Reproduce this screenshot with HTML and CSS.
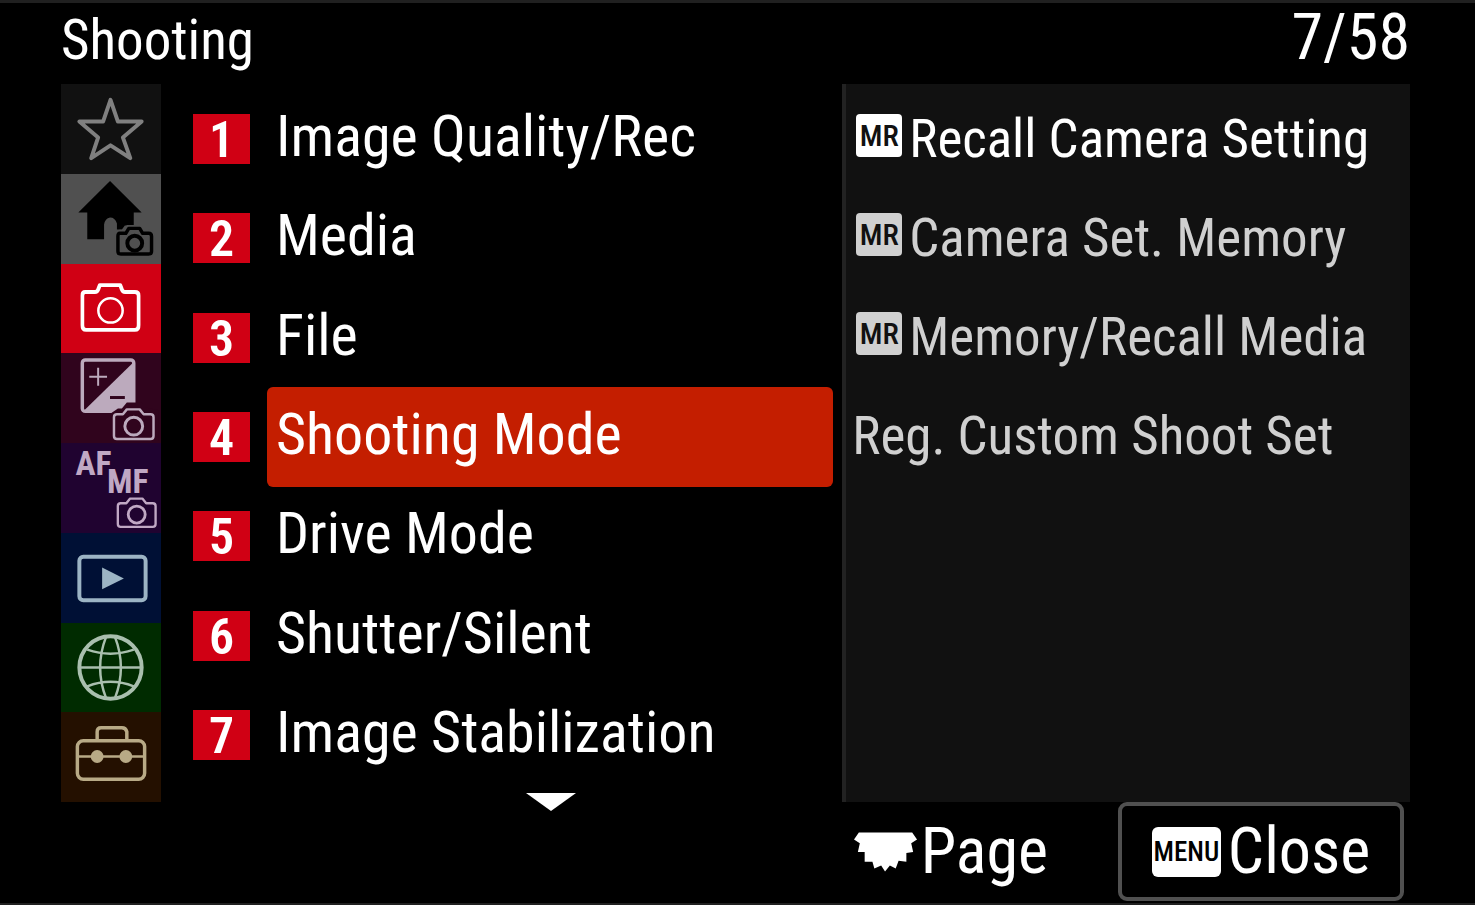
FILE: index.html
```html
<!DOCTYPE html>
<html lang="en">
<head>
<meta charset="utf-8">
<title>Shooting</title>
<meta name="viewport" content="width=device-width, initial-scale=1">
<link rel="stylesheet" href="styles.css">
</head>
<body>
<svg class="defs" aria-hidden="true">
  <symbol id="camera" viewBox="0 0 62 50">
    <path d="M5 9H15Q17.500 9 18.500 6L20 2H41L42.500 6Q43.500 9 46 9H56Q60 9 60 13V43Q60 48 56 48H6Q2 48 2 43V13Q2 9 5 9Z" fill="none" stroke="currentColor" stroke-width="4" stroke-linejoin="round"/>
    <circle cx="31" cy="28" r="12.500" fill="none" stroke="currentColor" stroke-width="2.600"/>
  </symbol>
  <symbol id="camera-small" viewBox="0 0 44 34">
    <path d="M5 7H11L15 2H28L32 7H39Q42 7 42 10V29Q42 32 39 32H5Q2 32 2 29V10Q2 7 5 7Z" fill="none" stroke="currentColor" stroke-width="2.500" stroke-linejoin="round"/>
    <circle cx="22" cy="19" r="9" fill="none" stroke="currentColor" stroke-width="3"/>
  </symbol>
</svg>
<header class="top">
  <h1 class="title">Shooting</h1>
  <p class="count">7/58</p>
</header>
<main class="menu">
  <nav class="tabs" aria-label="Menu tabs">
    <button class="tab tab-star" aria-label="My Menu">
      <svg viewBox="0 0 100 90"><path d="M49.500 16L57 38H81L62 54L69.500 75L49.500 62L30 75L37 54L18 38H42Z" fill="none" stroke="currentColor" stroke-width="4" stroke-linejoin="round"/></svg>
    </button>
    <button class="tab tab-home" aria-label="Main">
      <svg viewBox="0 0 100 90"><path d="M49 7L81 39H73V52H64L61 56H56V50Q54 44 49 44Q44 45 43 51V66H26V39H17Z" fill="currentColor"/>
      <path d="M59 60H65L68 55H79L82 60H88Q91 60 91 63V78Q91 81 88 81H60Q57 81 57 78V63Q57 60 59 60Z" fill="#505050" stroke="#505050" stroke-width="7"/><path d="M59 60H65L68 55H79L82 60H88Q91 60 91 63V78Q91 81 88 81H60Q57 81 57 78V63Q57 60 59 60Z" fill="none" stroke="currentColor" stroke-width="3.500" stroke-linejoin="round"/><circle cx="74" cy="70" r="7.500" fill="none" stroke="currentColor" stroke-width="4"/></svg>
    </button>
    <button class="tab tab-shoot" aria-label="Shooting" aria-current="page">
      <svg viewBox="0 0 100 90"><use href="#camera" x="19" y="19" width="61" height="50"/></svg>
    </button>
    <button class="tab tab-exposure" aria-label="Exposure/Color">
      <svg viewBox="0 0 100 90"><rect x="21" y="6" width="52" height="52" rx="3" fill="none" stroke="currentColor" stroke-width="3.500"/><path d="M73 8V58H22Z" fill="currentColor"/><path d="M28 23H46M37 14V32" stroke="currentColor" stroke-width="2"/><path d="M49 44H64" stroke="#30041d" stroke-width="3"/>
      <path d="M50 60L57 55H61L66 49H81L85 54L98 57V88H50Z" fill="#30041d"/><use href="#camera-small" x="51" y="54" width="44" height="34"/></svg>
    </button>
    <button class="tab tab-focus" aria-label="Focus">
      <svg viewBox="0 0 100 90"><text class="focus-text" x="14" y="32">AF</text><text class="focus-text" x="46" y="51">MF</text><use href="#camera-small" x="55" y="54" width="42" height="33"/></svg>
    </button>
    <button class="tab tab-play" aria-label="Playback">
      <svg viewBox="0 0 100 90"><rect x="18" y="24" width="67" height="44" rx="4" fill="none" stroke="currentColor" stroke-width="4"/><path d="M41 35L63 46L41 57Z" fill="currentColor"/></svg>
    </button>
    <button class="tab tab-network" aria-label="Network">
      <svg viewBox="0 0 100 90"><g fill="none" stroke="currentColor" stroke-width="2.500"><circle cx="49.500" cy="45" r="31.500" stroke-width="4"/><path d="M18 45H81M26 27Q49.500 35 73 27M26 64Q49.500 55 73 64M45 14Q33 45 45 76M54 14Q66 45 54 76"/></g></svg>
    </button>
    <button class="tab tab-setup" aria-label="Setup">
      <svg viewBox="0 0 100 90"><g fill="none" stroke="currentColor" stroke-width="3.500"><rect x="16" y="28" width="68" height="39" rx="6"/><path d="M36 27V19Q36 15 40 15H61Q65 15 66 19V27"/><path d="M16 44H84" stroke-width="2.500"/></g><circle cx="36" cy="44" r="6.500" fill="currentColor"/><circle cx="65" cy="44" r="6.500" fill="currentColor"/></svg>
    </button>
  </nav>
  <section class="groups" aria-label="Shooting groups">
    <ul class="group-list">
      <li class="row"><span class="num">1</span><button class="group">Image Quality/Rec</button></li>
      <li class="row"><span class="num">2</span><button class="group">Media</button></li>
      <li class="row"><span class="num">3</span><button class="group">File</button></li>
      <li class="row"><span class="num">4</span><button class="group selected">Shooting Mode</button></li>
      <li class="row"><span class="num">5</span><button class="group">Drive Mode</button></li>
      <li class="row"><span class="num">6</span><button class="group">Shutter/Silent</button></li>
      <li class="row"><span class="num">7</span><button class="group">Image Stabilization</button></li>
    </ul>
    <svg class="more" viewBox="0 0 50 18" aria-hidden="true"><path d="M0 0H50L25 18Z" fill="#fff"/></svg>
  </section>
  <section class="panel" aria-label="Shooting Mode">
    <button class="item item-on"><span class="chip">MR</span>Recall Camera Setting</button>
    <button class="item"><span class="chip">MR</span>Camera Set. Memory</button>
    <button class="item"><span class="chip">MR</span>Memory/Recall Media</button>
    <button class="item">Reg. Custom Shoot Set</button>
  </section>
</main>
<footer class="bottom">
  <p class="page-hint"><svg class="dial" viewBox="0 0 66 40" aria-hidden="true"><path d="M5 0H60L65 7L59 11L61 20L54 21L54 30L46 29L43 37L37 34L32 40L28 34L21 37L19 30L11 30L11 20L4 20L6 11L0 7Z" fill="#fff"/></svg>Page</p>
  <button class="close"><span class="menu-chip">MENU</span>Close</button>
</footer>
</body>
</html>
```
FILE: styles.css
```css
* { box-sizing: border-box; }

body {
  display: flex;
  flex-direction: column;
  min-height: 100vh;
  margin: 0;
  border-top: 3px solid #202020;
  border-bottom: 2px solid #202020;
  background: #000;
  color: #fff;
  font-family: "Roboto Condensed", "Liberation Sans Narrow", "Arial Narrow", "Liberation Sans", sans-serif;
}

button {
  margin: 0;
  padding: 0;
  border: 0;
  background: none;
  color: inherit;
  font: inherit;
  text-align: left;
  white-space: nowrap;
}

.defs { position: absolute; width: 0; height: 0; }

.top {
  display: flex;
  align-items: baseline;
  justify-content: space-between;
  height: 81px;
  padding: 0 65px 0 61px;
  line-height: 70px;
}

.title, .count { margin: 0; font-weight: 400; }
.title { font-size: 55px; }
.count { font-size: 64px; }

.menu {
  display: grid;
  flex: 1;
  grid-template-columns: 100px minmax(0, 6fr) minmax(0, 5fr);
  padding: 0 65px 0 61px;
}

.tabs { display: grid; grid-auto-rows: 1fr; }
.tab svg { display: block; width: 100%; height: 89px; }
.tab-star { background: #111; color: #808080; }
.tab-home { background: #505050; color: #000; }
.tab-shoot { background: #d00014; color: #fff; }
.tab-exposure { background: #30041d; color: #bcaabd; }
.tab-focus { background: #200330; color: #c0a8c4; }
.tab-play { background: #001035; color: #9cb4c4; }
.tab-network { background: #002b00; color: #a9bfae; }
.tab-setup { background: #241000; color: #b8aa86; }
.focus-text { fill: currentColor; font-size: 34px; font-weight: 700; }

.groups {
  display: flex;
  flex-direction: column;
  align-items: center;
  padding: 5px 9px 0 32px;
}

.group-list {
  display: grid;
  flex: 1;
  grid-auto-rows: 1fr;
  width: 100%;
  margin: 0;
  padding: 0;
  list-style: none;
}

.row { display: flex; align-items: center; gap: 17px; }

.num {
  width: 57px;
  height: 50px;
  background: #d00014;
  font-size: 50px;
  font-weight: 600;
  line-height: 52px;
  text-align: center;
}

.group {
  flex: 1;
  align-self: stretch;
  padding: 0 9px 6px;
  border-radius: 6px;
  font-size: 58px;
}

.selected { background: #c41e00; }

.more { width: 50px; height: 18px; margin: 8px 0 -9px 75px; }

.panel {
  display: grid;
  grid-auto-rows: 99px;
  align-content: start;
  padding: 5px 0 0 6px;
  border-left: 4px solid #222;
  background: #111;
}

.item { display: flex; align-items: center; color: #d0d0d0; font-size: 53px; }
.item-on { color: #fff; }

.chip, .menu-chip { flex: none; text-align: center; }

.chip {
  width: 46px;
  height: 43px;
  margin: 0 7px 6px 4px;
  border-radius: 4px;
  background: #d0d0d0;
  color: #111;
  font-size: 30px;
  font-weight: 500;
  line-height: 43px;
}

.item-on .chip { background: #fff; }

.bottom {
  display: flex;
  justify-content: flex-end;
  gap: 70px;
  height: 101px;
  padding: 0 71px 2px 61px;
  font-size: 64px;
}

.page-hint { display: flex; align-items: center; gap: 3px; margin: 0; }
.dial { width: 64px; height: 40px; }

.close {
  display: flex;
  align-items: center;
  justify-content: center;
  gap: 7px;
  width: 286px;
  border: 4px solid #505050;
  border-radius: 9px;
}

.menu-chip {
  width: 69px;
  height: 50px;
  border-radius: 6px;
  background: #fff;
  color: #000;
  font-size: 27px;
  font-weight: 500;
  line-height: 50px;
}
```
